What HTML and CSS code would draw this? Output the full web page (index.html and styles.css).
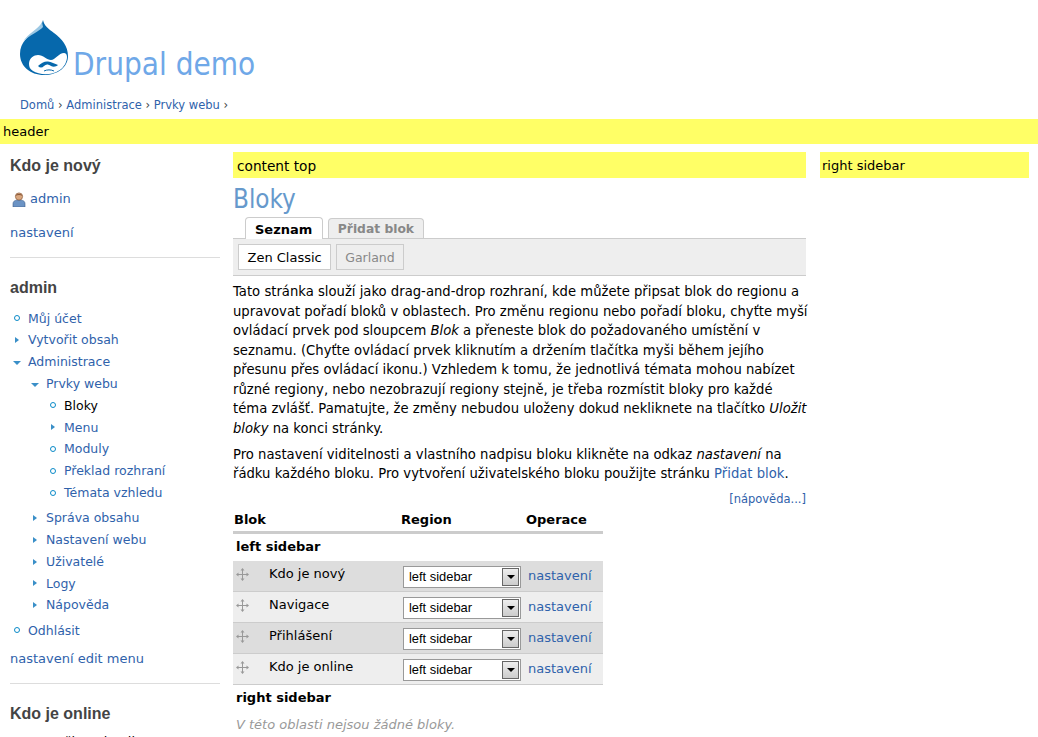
FILE: index.html
```html
<!DOCTYPE html>
<html lang="cs">
<head>
<meta charset="utf-8">
<title>Bloky | Drupal demo</title>
<link rel="stylesheet" href="styles.css">
</head>
<body>
<header class="site-head">
  <div class="brand">
    <svg class="logo" viewBox="0 0 48 55" width="48" height="55" aria-hidden="true">
      <path d="M23 0c1 6 6 9 11 13 8 6 14 13 14 23 0 11-10 19-24 19C10 55 0 46 0 34 0 22 9 16 15 11 19 8 22 5 23 0z" fill="#0668ac"/>
      <path d="M22 2C19 9 8 13 3 22 9 15 20 11 23 7z" fill="#9cc8e4"/>
      <path d="M9 44C9 38 14 35 18 35 23 35 27 40 31 40 35 40 39 33 44 33 47 33 48 37 46 42 44 48 38 52 32 53.500 26 55 17 54 13 51 10 49 9 47 9 44z" fill="#fff"/>
      <path d="M18 46C21 43 25 41 28 41.500 31 42 35 44 38 45 36 47 33 47 31 46 28 44 26 44 24 46 22 48 20 48 18 46z" fill="#0668ac"/>
      <path d="M24 51c3-1.500 7-1.500 10 0" fill="none" stroke="#0668ac" stroke-width="1"/>
    </svg>
    <h1 class="site-name">Drupal demo</h1>
  </div>
  <nav class="crumbs"><a href="#">Domů</a> › <a href="#">Administrace</a> › <a href="#">Prvky webu</a> ›</nav>
</header>
<div class="region region-header">header</div>
<div class="columns">
  <aside class="left">
    <section class="block block-new">
      <h2>Kdo je nový</h2>
      <p class="user">
        <svg viewBox="0 0 14 15" width="14" height="15" aria-hidden="true">
          <path d="M1 15v-3c0-3 2-4 6-4s6 1 6 4v3z" fill="#6b93c4" stroke="#3f5f8c" stroke-width=".6"/>
          <circle cx="7" cy="4.500" r="3.600" fill="#d9a77f" stroke="#8a5a3a" stroke-width=".7"/>
          <path d="M3.500 3.800c.5-2.500 6.500-2.500 7 0-2-1-5-1-7 0z" fill="#8a5a3a"/>
        </svg>
        <a href="#">admin</a>
      </p>
      <p class="cfg"><a href="#">nastavení</a></p>
    </section>
    <section class="block block-admin">
      <h2>admin</h2>
      <ul class="menu">
        <li><div class="row"><i class="leaf"></i><a href="#">Můj účet</a></div></li>
        <li><div class="row"><i class="closed"></i><a href="#">Vytvořit obsah</a></div></li>
        <li><div class="row"><i class="open"></i><a href="#">Administrace</a></div>
          <ul class="menu">
            <li><div class="row"><i class="open"></i><a href="#">Prvky webu</a></div>
              <ul class="menu">
                <li><div class="row"><i class="leaf"></i><a class="active" href="#">Bloky</a></div></li>
                <li><div class="row"><i class="closed"></i><a href="#">Menu</a></div></li>
                <li><div class="row"><i class="leaf"></i><a href="#">Moduly</a></div></li>
                <li><div class="row"><i class="leaf"></i><a href="#">Překlad rozhraní</a></div></li>
                <li><div class="row"><i class="leaf"></i><a href="#">Témata vzhledu</a></div></li>
              </ul>
            </li>
            <li><div class="row"><i class="closed"></i><a href="#">Správa obsahu</a></div></li>
            <li><div class="row"><i class="closed"></i><a href="#">Nastavení webu</a></div></li>
            <li><div class="row"><i class="closed"></i><a href="#">Uživatelé</a></div></li>
            <li><div class="row"><i class="closed"></i><a href="#">Logy</a></div></li>
            <li><div class="row"><i class="closed"></i><a href="#">Nápověda</a></div></li>
          </ul>
        </li>
        <li><div class="row"><i class="leaf"></i><a href="#">Odhlásit</a></div></li>
      </ul>
      <p class="cfg cfg-menu"><a href="#">nastavení</a> <a href="#">edit menu</a></p>
    </section>
    <section class="block block-online">
      <h2>Kdo je online</h2>
      <p class="online">1 uživatel online</p>
    </section>
  </aside>
  <main class="center">
    <div class="region region-top">content top</div>
    <h1 class="page-title">Bloky</h1>
    <ul class="tabs">
      <li class="tab current"><a href="#">Seznam</a></li>
      <li class="tab"><a href="#">Přidat blok</a></li>
    </ul>
    <div class="subtabs">
      <a class="sub current" href="#">Zen Classic</a>
      <a class="sub" href="#">Garland</a>
    </div>
    <div class="help">
      <p>Tato stránka slouží jako drag-and-drop rozhraní, kde můžete připsat blok do regionu a<br>upravovat pořadí bloků v oblastech. Pro změnu regionu nebo pořadí bloku, chyťte myší<br>ovládací prvek pod sloupcem <em>Blok</em> a přeneste blok do požadovaného umístění v<br>seznamu. (Chyťte ovládací prvek kliknutím a držením tlačítka myši během jejího<br>přesunu přes ovládací ikonu.) Vzhledem k tomu, že jednotlivá témata mohou nabízet<br>různé regiony, nebo nezobrazují regiony stejně, je třeba rozmístit bloky pro každé<br>téma zvlášť. Pamatujte, že změny nebudou uloženy dokud nekliknete na tlačítko <em>Uložit<br>bloky</em> na konci stránky.</p>
      <p>Pro nastavení viditelnosti a vlastního nadpisu bloku klikněte na odkaz <em>nastavení</em> na<br>řádku každého bloku. Pro vytvoření uživatelského bloku použijte stránku <a href="#">Přidat blok</a>.</p>
    </div>
    <div class="more"><a href="#">[nápověda...]</a></div>
    <table class="blocks">
      <colgroup><col class="c1"><col class="c2"><col class="c3"></colgroup>
      <thead><tr><th>Blok</th><th>Region</th><th>Operace</th></tr></thead>
      <tbody>
        <tr class="group"><td colspan="3">left sidebar</td></tr>
        <tr class="item odd">
          <td><div class="name"><svg class="grip" viewBox="0 0 13 13" width="13" height="13" aria-hidden="true"><path d="M6.500 1v11M1 6.500h11" stroke="#999" stroke-width="1"/><path d="M6.500 0l2 2.500h-4zM6.500 13l2-2.500h-4zM0 6.500l2.500-2v4zM13 6.500l-2.500-2v4z" fill="#999"/></svg><span>Kdo je nový</span></div></td>
          <td><div class="select"><span>left sidebar</span><b class="arrow"></b></div></td>
          <td class="op"><a href="#">nastavení</a></td>
        </tr>
        <tr class="item even">
          <td><div class="name"><svg class="grip" viewBox="0 0 13 13" width="13" height="13" aria-hidden="true"><path d="M6.500 1v11M1 6.500h11" stroke="#999" stroke-width="1"/><path d="M6.500 0l2 2.500h-4zM6.500 13l2-2.500h-4zM0 6.500l2.500-2v4zM13 6.500l-2.500-2v4z" fill="#999"/></svg><span>Navigace</span></div></td>
          <td><div class="select"><span>left sidebar</span><b class="arrow"></b></div></td>
          <td class="op"><a href="#">nastavení</a></td>
        </tr>
        <tr class="item odd">
          <td><div class="name"><svg class="grip" viewBox="0 0 13 13" width="13" height="13" aria-hidden="true"><path d="M6.500 1v11M1 6.500h11" stroke="#999" stroke-width="1"/><path d="M6.500 0l2 2.500h-4zM6.500 13l2-2.500h-4zM0 6.500l2.500-2v4zM13 6.500l-2.500-2v4z" fill="#999"/></svg><span>Přihlášení</span></div></td>
          <td><div class="select"><span>left sidebar</span><b class="arrow"></b></div></td>
          <td class="op"><a href="#">nastavení</a></td>
        </tr>
        <tr class="item even">
          <td><div class="name"><svg class="grip" viewBox="0 0 13 13" width="13" height="13" aria-hidden="true"><path d="M6.500 1v11M1 6.500h11" stroke="#999" stroke-width="1"/><path d="M6.500 0l2 2.500h-4zM6.500 13l2-2.500h-4zM0 6.500l2.500-2v4zM13 6.500l-2.500-2v4z" fill="#999"/></svg><span>Kdo je online</span></div></td>
          <td><div class="select"><span>left sidebar</span><b class="arrow"></b></div></td>
          <td class="op"><a href="#">nastavení</a></td>
        </tr>
        <tr class="group group-right"><td colspan="3">right sidebar</td></tr>
        <tr class="empty"><td colspan="3">V této oblasti nejsou žádné bloky.</td></tr>
      </tbody>
    </table>
  </main>
  <aside class="right">
    <div class="region region-top region-side">right sidebar</div>
  </aside>
</div>
</body>
</html>
```
FILE: styles.css
```css
html, body { height: 737px; overflow: hidden; }
body {
  margin: 0;
  background: #fff;
  color: #000;
  font: 13px/19.5px "DejaVu Sans", Verdana, sans-serif;
}
a { color: #2f62ab; text-decoration: none; }
p { margin: 0; }

/* header */
.site-head { padding: 20px 0 0 20px; height: 119px; box-sizing: border-box; }
.brand { display: flex; align-items: flex-end; height: 55px; }
.logo { flex: none; }
.site-name {
  margin: 0 0 -8px 5px;
  font: 400 31.2px/38px "DejaVu Sans Condensed", "DejaVu Sans", sans-serif;
  color: #6fa8e8;
}
.crumbs { margin-top: 21px; font-size: 11.5px; line-height: 18px; color: #444; }

.region { background: #ff6; padding-left: 3px; }
.region-header { height: 25px; line-height: 25px; }
.region-top { padding-left: 4px; height: 26px; line-height: 28px; font-size: 13.7px; }
.region-side { padding-left: 2px; font-size: 13px; }

/* three columns */
.columns {
  display: grid;
  grid-template-columns: 210px 573px 210px;
  column-gap: 13px;
  padding: 8px 0 0 10px;
}
.right { margin-left: 1px; }

/* left sidebar */
.block h2 {
  margin: 0;
  font: 700 16px/26px "Liberation Sans", Arial, sans-serif;
  color: #444;
}
.block-new { height: 105px; border-bottom: 1px solid #ddd; }
.block-new h2 { height: 26px; padding-top: 1px; }
.user { display: flex; align-items: center; gap: 4px; height: 20px; margin-top: 10px; padding-left: 2px; }
.cfg { margin-top: 14px; }
.block-admin { padding-top: 17px; height: 408px; border-bottom: 1px solid #ddd; }
.block-online { padding-top: 17px; }
.online { margin-top: 5px; padding-left: 34px; }

.menu { list-style: none; margin: 0; padding: 0; font-size: 12.5px; }
.menu .menu { margin-left: 18px; }
.block-admin > .menu { margin-top: 6.400px; }
.row { display: flex; align-items: center; height: 21.8px; }
.row i { flex: none; width: 18px; display: flex; align-items: center; }
.row i::before { content: ""; display: block; }
.leaf::before {
  width: 4px; height: 4px; margin-left: 4px;
  border: 1px solid #0a8ac8; border-radius: 50%;
}
.closed::before {
  margin-left: 5px;
  border-left: 4px solid #3a8fc8;
  border-top: 3.500px solid transparent;
  border-bottom: 3.500px solid transparent;
}
.open::before {
  margin: 2px 0 0 3px;
  border-top: 4px solid #3a8fc8;
  border-left: 4px solid transparent;
  border-right: 4px solid transparent;
}
.active { color: #000; }
.menu .menu > li:last-child { padding-bottom: 3.500px; }
.cfg-menu { margin-top: 7.500px; }

/* main */
.page-title {
  margin: 6px 0 0;
  font: 400 25.8px/31px "DejaVu Sans Condensed", "DejaVu Sans", sans-serif;
  color: #6699cc;
}
.tabs {
  display: flex;
  align-items: flex-end;
  gap: 5px;
  list-style: none;
  margin: 3px 0 0;
  padding: 0 0 0 12px;
  height: 20px;
}
.tab a {
  display: block;
  height: 19px;
  padding: 0 8.500px;
  border: 1px solid #ccc;
  border-bottom: 0;
  border-radius: 4px 4px 0 0;
  background: #eee;
  color: #888;
  font-weight: 700;
  font-size: 12.3px;
  line-height: 21px;
}
.tab.current a {
  height: 21px;
  padding: 0 10px 0 9px;
  background: #fff;
  color: #000;
  font-size: 13px;
  line-height: 24px;
  position: relative;
  z-index: 1;
  margin-bottom: -1px;
}
.subtabs {
  display: flex;
  gap: 5px;
  padding: 5px;
  box-sizing: border-box;
  height: 38px;
  background: #eee;
  border-top: 1px solid #ccc;
  border-bottom: 1px solid #ccc;
}
.sub {
  padding: 0 8px;
  height: 24px;
  line-height: 25px;
  border: 1px solid #ccc;
  color: #888;
  font-size: 12.5px;
}
.sub.current { padding: 0 8.500px; background: #fff; color: #000; font-size: 13px; }
.help { margin-top: 6px; font-size: 13.2px; white-space: nowrap; }
.help p { margin-bottom: 6.500px; }
.more { text-align: right; font-size: 11.5px; line-height: 19px; margin-top: 4px; }

.blocks { width: 370px; table-layout: fixed; border-collapse: collapse; margin-top: 0; }
.c1 { width: 168px; }
.c2 { width: 124px; }
.c3 { width: 78px; }
.blocks th {
  text-align: left;
  font-weight: 700;
  padding: 0 0 0 1px;
  height: 22px;
  border-bottom: 3px solid #ccc;
}
.blocks th:nth-child(2) { padding-left: 0; }
.group td { height: 25px; padding: 0 0 2px 3px; font-weight: 700; }
.item td { height: 30px; padding: 0; border-bottom: 1px solid #ccc; }
.odd { background: #ddd; }
.even { background: #eee; }
.name { display: flex; align-items: center; padding: 0 0 5px 3px; }
.name .grip { margin-bottom: -2px; }
.grip { flex: none; margin-right: 20px; }
.select {
  display: flex;
  align-items: center;
  justify-content: space-between;
  box-sizing: border-box;
  width: 118px;
  height: 22px;
  margin: 1px 0 0 2px;
  padding: 0 1px 0 5px;
  border: 1px solid #999;
  background: #fff;
  font: 12.9px/20px "Liberation Sans", Arial, sans-serif;
}
.arrow {
  display: flex;
  align-items: center;
  justify-content: center;
  box-sizing: border-box;
  width: 17px;
  height: 18px;
  border: 1px solid #666;
  background: linear-gradient(#eee, #ccc);
}
.arrow::before {
  content: "";
  border-top: 4px solid #000;
  border-left: 4px solid transparent;
  border-right: 4px solid transparent;
}
.item td.op { height: 29px; padding: 0 0 1px 3px; }
.group-right td { height: 25px; padding-bottom: 0; }
.empty td { height: 25px; padding: 2px 0 0 3px; color: #999; font-style: italic; }
```
